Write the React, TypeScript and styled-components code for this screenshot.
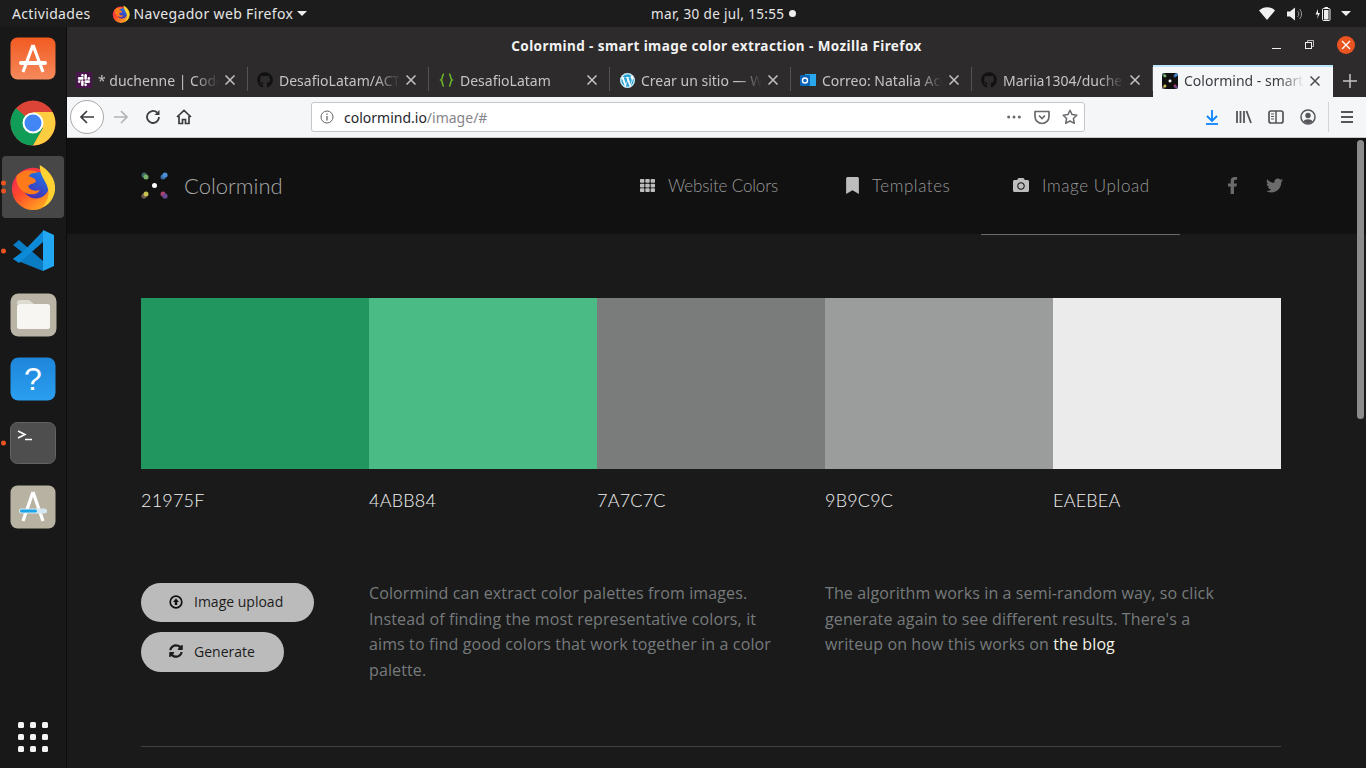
import React from 'react'
import styled, { createGlobalStyle } from 'styled-components'
import { FaBookmark, FaCamera, FaFacebookF, FaGithub, FaSlack, FaTh, FaTwitter, FaWordpress, FaSyncAlt } from 'react-icons/fa'

const GlobalStyle = createGlobalStyle`
  html, body {
    margin: 0;
    padding: 0;
    height: 100%;
    overflow: hidden;
    background: #1a1a1a;
  }
`

const Screen = styled.div`
  width: 1366px;
  height: 768px;
  display: flex;
  flex-direction: column;
  overflow: hidden;
  font-family: 'Noto Sans', 'Open Sans', sans-serif;
`

const TopBar = styled.div`
  height: 27px;
  flex: none;
  display: flex;
  align-items: center;
  background: #1c1c1c;
  color: #e6e6e6;
  font-size: 14px;
  letter-spacing: 0.35px;
  padding-left: 12px;
`

const TopLeft = styled.div`
  width: 639px;
  flex: none;
  display: flex;
  align-items: center;
`

const AppMenu = styled.div`
  display: flex;
  align-items: center;
  gap: 4px;
  margin-left: 21px;
`

const Clock = styled.div`
  display: flex;
  align-items: center;
  gap: 5px;
  width: 150px;
  font-size: 13.5px;
  white-space: nowrap;
`

const StatusDot = styled.span`
  width: 7px;
  height: 7px;
  border-radius: 50%;
  background: #eee;
`

const Tray = styled.div`
  margin-left: auto;
  display: flex;
  align-items: center;
  gap: 12px;
  padding-right: 15px;
`

const Caret = styled.span<{ $tight?: boolean }>`
  width: 0;
  height: 0;
  margin-left: ${(p) => (p.$tight ? '-2px' : '0')};
  border-left: 5px solid transparent;
  border-right: 5px solid transparent;
  border-top: 5px solid #eee;
`

const Desktop = styled.div`
  flex: 1;
  min-height: 0;
  display: flex;
`

const Dock = styled.div`
  width: 66px;
  flex: none;
  display: flex;
  flex-direction: column;
  background: #181818;
  border-right: 1px solid #0c0c0c;
`

const DockItem = styled.div<{ $active?: boolean }>`
  position: relative;
  width: 62px;
  height: 62px;
  margin: 1px 2px;
  display: flex;
  align-items: center;
  justify-content: center;
  border-radius: 4px;
  background: ${(p) => (p.$active ? '#474747' : 'transparent')};
`

const RunDots = styled.div`
  position: absolute;
  left: 0;
  top: 50%;
  transform: translate(-1px, -50%);
  display: flex;
  flex-direction: column;
  gap: 3px;
`

const RunDot = styled.span`
  width: 5px;
  height: 5px;
  border-radius: 50%;
  background: #e95420;
`

const DockGrid = styled.div`
  margin-top: auto;
  margin-bottom: 16px;
  margin-left: 18px;
  display: grid;
  grid-template-columns: repeat(3, 6px);
  gap: 6px;
`

const GridDot = styled.span`
  width: 6px;
  height: 6px;
  border-radius: 1.5px;
  background: #f4f4f4;
`

const Browser = styled.div`
  flex: 1;
  min-width: 0;
  display: flex;
  flex-direction: column;
`

const TitleBar = styled.div`
  position: relative;
  height: 38px;
  flex: none;
  display: flex;
  align-items: center;
  justify-content: center;
  background: #2d2b2c;
  color: #f2f2f2;
  font-size: 13.5px;
  font-weight: 700;
  letter-spacing: 0.42px;
`

const WindowControls = styled.div`
  position: absolute;
  right: 11px;
  top: 9px;
  display: flex;
  align-items: center;
  gap: 20px;
`

const CloseCircle = styled.div`
  width: 18px;
  height: 18px;
  border-radius: 50%;
  background: #e95420;
  display: flex;
  align-items: center;
  justify-content: center;
`

const TabStrip = styled.div`
  height: 32px;
  flex: none;
  display: flex;
  background: #2d2b2c;
`

const Tab = styled.div<{ $active?: boolean; $last?: boolean }>`
  position: relative;
  width: ${(p) => (p.$active ? '180px' : '181px')};
  flex: none;
  box-sizing: border-box;
  display: flex;
  align-items: center;
  gap: 6px;
  padding: 0 9px ${(p) => (p.$active ? '3px' : '2px')};
  font-size: 14px;
  color: ${(p) => (p.$active ? '#3d3d44' : '#c4c4c6')};
  background: ${(p) => (p.$active ? '#f5f6f7' : 'transparent')};
  border-top: ${(p) => (p.$active ? '2px solid #bce6fb' : '0')};
  &::after {
    content: '';
    display: ${(p) => (p.$active || p.$last ? 'none' : 'block')};
    position: absolute;
    right: 0;
    top: 2px;
    bottom: 6px;
    width: 1px;
    background: #555354;
  }
`

const FavSlot = styled.span`
  width: 16px;
  height: 16px;
  flex: none;
  display: flex;
  align-items: center;
  justify-content: center;
`

const SlackTile = styled(FavSlot)`
  background: #4a154b;
  color: #fff;
  font-size: 14px;
`

const TabTitle = styled.span`
  flex: 1;
  min-width: 0;
  white-space: nowrap;
  overflow: hidden;
  -webkit-mask-image: linear-gradient(to right, #000 80%, transparent 100%);
  mask-image: linear-gradient(to right, #000 80%, transparent 100%);
`

const NewTab = styled.div`
  flex: 1;
  display: flex;
  align-items: center;
  justify-content: center;
`

const NavBar = styled.div`
  position: relative;
  height: 40px;
  flex: none;
  display: flex;
  align-items: center;
  background: #f5f6f7;
  border-bottom: 1px solid #c9c9cb;
`

const BackButton = styled.div`
  width: 32px;
  height: 32px;
  margin-left: 3px;
  border-radius: 50%;
  background: #fff;
  border: 1px solid #a8a8aa;
  display: flex;
  align-items: center;
  justify-content: center;
`

const NavGlyph = styled.div<{ $width: number }>`
  width: ${(p) => p.$width}px;
  flex: none;
  display: flex;
  align-items: center;
  justify-content: center;
`

const UrlBox = styled.div`
  width: 774px;
  height: 30px;
  box-sizing: border-box;
  margin-left: 111px;
  padding: 0 6px 0 8px;
  display: flex;
  align-items: center;
  background: #fff;
  border: 1px solid #c6c6c8;
  border-radius: 3px;
  font-size: 14px;
`

const UrlHost = styled.span`
  color: #26262a;
  margin-left: 10px;
`

const UrlPath = styled.span`
  color: #85858a;
`

const UrlActions = styled.div`
  margin-left: auto;
  display: flex;
  align-items: center;
  gap: 12px;
`

const RightTools = styled.div`
  margin-left: 111px;
  display: flex;
  align-items: center;
`

const ToolDivider = styled.span`
  width: 1px;
  height: 30px;
  margin: 0 2px 0 4px;
  background: #d4d4d6;
`

const Viewport = styled.div`
  position: relative;
  flex: 1;
  min-height: 0;
  overflow: hidden;
  background: #1a1a1a;
`

const ScrollThumb = styled.div`
  position: absolute;
  top: 2px;
  right: 2px;
  width: 7px;
  height: 279px;
  border-radius: 4px;
  background: #8b8b8b;
`

const SiteHeader = styled.header`
  height: 96px;
  box-sizing: border-box;
  padding-left: 74px;
  display: flex;
  align-items: stretch;
  background: #111111;
`

const Brand = styled.div`
  display: flex;
  align-items: center;
  gap: 16px;
  width: 467px;
  padding-bottom: 2px;
  color: #a8a8a8;
  font-family: Lato, sans-serif;
  font-weight: 300;
  font-size: 22px;
`

const NavItem = styled.a<{ $active?: boolean; $width: number; $tracking: number }>`
  box-sizing: border-box;
  width: ${(p) => p.$width}px;
  height: 97px;
  padding: 0 0 2px 32px;
  display: flex;
  align-items: center;
  gap: 13px;
  color: #9a9a9a;
  font-family: Lato, sans-serif;
  font-weight: 300;
  font-size: 17px;
  letter-spacing: ${(p) => p.$tracking}px;
  margin-right: 4px;
  white-space: nowrap;
  border-bottom: 1px solid ${(p) => (p.$active ? '#6a6a6a' : 'transparent')};
  svg {
    color: #bdbdbd;
    flex: none;
  }
`

const BookmarkGlyph = styled(FaBookmark)`
  margin: 0 -2px;
`

const Social = styled.div`
  margin-left: 40px;
  padding-bottom: 2px;
  display: flex;
  align-items: center;
  gap: 25px;
  color: #6b6b6b;
  font-size: 17px;
`

const Main = styled.main`
  padding: 64px 85px 0 74px;
`

const Palette = styled.div`
  display: grid;
  grid-template-columns: repeat(5, 228px);
`

const Swatch = styled.div`
  display: flex;
  flex-direction: column;
`

const ColorBlock = styled.div<{ $color: string }>`
  height: 171px;
  background: ${(p) => p.$color};
`

const Hex = styled.div`
  margin-top: 19px;
  color: #f2f2f2;
  font-family: Lato, sans-serif;
  font-weight: 300;
  font-size: 18px;
  letter-spacing: 0.2px;
  line-height: 24px;
`

const Info = styled.section`
  margin-top: 71px;
  display: grid;
  grid-template-columns: repeat(5, 228px);
  height: 163px;
  border-bottom: 1px solid #414141;
`

const Actions = styled.div`
  display: flex;
  flex-direction: column;
  align-items: flex-start;
  gap: 10px;
`

const PillButton = styled.button<{ $height: number; $width: number }>`
  width: ${(p) => p.$width}px;
  height: ${(p) => p.$height}px;
  padding: 0 0 2px 28px;
  display: flex;
  align-items: center;
  gap: 11px;
  border: 0;
  border-radius: 20px;
  background: #bbbbbb;
  color: #1c1c1c;
  font-family: 'Open Sans', sans-serif;
  font-size: 14px;
`

const Copy = styled.p`
  grid-column: span 2;
  margin: -2px 0 0 0;
  max-width: 415px;
  color: #777a7c;
  font-family: 'Open Sans', sans-serif;
  font-size: 16px;
  letter-spacing: 0.12px;
  line-height: 25.6px;
  a {
    color: #f4f1e4;
  }
`

const FirefoxIcon = ({ size }: { size: number }) => {
  const id = `ff${size}`
  return (
    <svg width={size} height={size} viewBox='0 0 48 48'>
      <defs>
        <linearGradient id={id} x1='0' y1='0.1' x2='0.75' y2='1'>
          <stop offset='0' stopColor='#f0205f' />
          <stop offset='0.45' stopColor='#ff4a2a' />
          <stop offset='1' stopColor='#ffb020' />
        </linearGradient>
        <linearGradient id={`${id}g`} x1='0.8' y1='0' x2='0.3' y2='1'>
          <stop offset='0' stopColor='#1e78e8' />
          <stop offset='1' stopColor='#4a2ab0' />
        </linearGradient>
      </defs>
      <circle cx='24' cy='26' r='22' fill={`url(#${id})`} />
      <circle cx='27' cy='22' r='14' fill={`url(#${id}g)`} />
      <path d='M31 1c9 5 17 14 16 26-1 9-7 16-13 18 4-5 7-10 6-17-1-10-9-14-9-27z' fill='#ffd234' />
      <path d='M7 12c6-6 16-7 22-3-5 0-9 1-9 4 3 1 7 2 7 5-1 3-6 2-8 5 1 4 6 6 12 4-2 5-9 6-15 3-6-3-11-10-9-18z' fill='#ff7a1a' />
    </svg>
  )
}

const ChromeIcon = () => (
  <svg width='46' height='46' viewBox='0 0 46 46'>
    <circle cx='23' cy='23' r='22.5' fill='#db4437' />
    <path d='M23 23 3.500 34.300A22.500 22.500 0 0 1 6 8.200z' fill='#0f9d58' />
    <path d='M23 23 3.500 34.300A22.500 22.500 0 0 0 23 45.500L33 28z' fill='#0f9d58' />
    <path d='M23 12h19.500A22.500 22.500 0 0 1 23 45.500L33 28z' fill='#ffcd40' />
    <circle cx='23' cy='23' r='10.500' fill='#fff' />
    <circle cx='23' cy='23' r='8.500' fill='#4285f4' />
  </svg>
)

const SoftwareIcon = () => (
  <svg width='46' height='44' viewBox='0 0 46 44'>
    <defs>
      <linearGradient id='sw' x1='0' y1='0' x2='0' y2='1'>
        <stop offset='0' stopColor='#f25a21' />
        <stop offset='1' stopColor='#f58a5c' />
      </linearGradient>
    </defs>
    <rect x='0.500' y='0.500' width='45' height='42' rx='7' fill='url(#sw)' />
    <path d='M23 8 13 35M23 8l10 27' stroke='#fff' strokeWidth='3.200' fill='none' />
    <rect x='9' y='24' width='28' height='4' rx='2' fill='#fff' />
  </svg>
)

const VscodeIcon = () => (
  <svg width='44' height='44' viewBox='0 0 44 44'>
    <path d='M2 16 8 11l24 21-0 10L2 30l9-7z' fill='#0a7cc4' />
    <path d='M32 2 12 23 2 30l6 4 24-21z' fill='#0e8bd8' />
    <path d='M32 1l11 5v31l-11 5z' fill='#22a7f2' />
  </svg>
)

const FilesIcon = () => (
  <svg width='47' height='44' viewBox='0 0 47 44'>
    <rect x='0.500' y='0.500' width='46' height='43' rx='8' fill='#b9b4a5' />
    <path d='M7 10a3 3 0 0 1 3-3h9l5 4h-17z' fill='#dedbd3' />
    <rect x='7' y='11' width='33' height='25' rx='2.500' fill='#f7f6f3' />
  </svg>
)

const HelpIcon = () => (
  <svg width='46' height='44' viewBox='0 0 46 44'>
    <defs>
      <linearGradient id='hp' x1='0' y1='0' x2='0' y2='1'>
        <stop offset='0' stopColor='#1f86da' />
        <stop offset='1' stopColor='#2a9ff0' />
      </linearGradient>
    </defs>
    <rect x='0.500' y='0.500' width='45' height='43' rx='8' fill='url(#hp)' />
    <text x='23' y='33' textAnchor='middle' fontFamily='Liberation Sans, sans-serif' fontSize='32' fill='#fff'>?</text>
  </svg>
)

const TerminalIcon = () => (
  <svg width='46' height='42' viewBox='0 0 46 42'>
    <rect x='0.500' y='0.500' width='45' height='41' rx='7' fill='#4e4e4e' stroke='#636363' />
    <path d='M8 9l7 3.500-7 3.500' stroke='#fff' strokeWidth='1.500' fill='none' />
    <path d='M15 17.500h7' stroke='#fff' strokeWidth='1.500' />
  </svg>
)

const UpdatesIcon = () => (
  <svg width='46' height='44' viewBox='0 0 46 44'>
    <rect x='0.500' y='0.500' width='45' height='43' rx='7' fill='#b7b2a2' />
    <path d='M23 7 13 36M23 7l10 29' stroke='#fff' strokeWidth='3.200' fill='none' />
    <rect x='9' y='23.500' width='28' height='5' rx='2.500' fill='#d4e8f2' />
    <rect x='10' y='24.500' width='17' height='3' rx='1.500' fill='#1ea5e8' />
  </svg>
)

const TabClose = ({ color = '#c4c4c6' }: { color?: string }) => (
  <svg width='10' height='10' viewBox='0 0 10 10' style={{ flex: 'none', marginRight: 4 }}>
    <path d='M.5.500l9 9M9.500.500l-9 9' stroke={color} strokeWidth='1.500' />
  </svg>
)

const BraceIcon = () => (
  <svg width='16' height='16' viewBox='0 0 16 16'>
    <path d='M6 2C4 2 5 7 3 8c2 1 1 6 3 6M11 2c2 0 1 5 3 6-2 1-1 6-3 6' stroke='#6bb52a' strokeWidth='1.600' fill='none' />
  </svg>
)

const OutlookIcon = () => (
  <svg width='16' height='16' viewBox='0 0 16 16'>
    <rect x='5' y='2' width='11' height='12' fill='#28a8ea' />
    <rect x='0' y='3' width='10' height='11' rx='1' fill='#0a64b8' />
    <circle cx='5' cy='8.500' r='2.500' fill='none' stroke='#fff' strokeWidth='1.400' />
  </svg>
)

const ColormindMark = ({ size, dark }: { size: number; dark?: boolean }) => (
  <svg width={size} height={size} viewBox='0 0 27 27'>
    {dark && <rect width='27' height='27' rx='4' fill='#111' />}
    <circle cx='13.500' cy='13.500' r='2.500' fill='#fff' />
    <circle cx='3.200' cy='3.200' r='2.600' fill='#3d6b66' />
    <circle cx='5' cy='5' r='2.500' fill='#78b06a' />
    <circle cx='22' cy='5' r='2.500' fill='#3a6ea8' />
    <circle cx='24' cy='3' r='2.600' fill='#4a90d8' />
    <circle cx='3' cy='24' r='2.600' fill='#6a5a50' />
    <circle cx='5' cy='22' r='2.500' fill='#c8c050' />
    <circle cx='22' cy='22' r='2.500' fill='#b04070' />
    <circle cx='24' cy='24' r='2.600' fill='#6a4a90' />
  </svg>
)

const UploadGlyph = () => (
  <svg width='14' height='14' viewBox='0 0 14 14'>
    <circle cx='7' cy='7' r='5.800' fill='none' stroke='#111' strokeWidth='1.700' />
    <path d='M7 3.400 10 7H8.200v3H5.800V7H4z' fill='#111' />
  </svg>
)

const swatches = [
  { color: '#21975f', hex: '21975F' },
  { color: '#4abb84', hex: '4ABB84' },
  { color: '#7a7c7c', hex: '7A7C7C' },
  { color: '#9b9c9c', hex: '9B9C9C' },
  { color: '#eaebea', hex: 'EAEBEA' },
]

const GITHUB = <FaGithub size={16} color='#111' />

const tabs: { title: string; icon: React.ReactNode }[] = [
  { title: '* duchenne | Code Institute', icon: <SlackTile><FaSlack /></SlackTile> },
  { title: 'DesafioLatam/ACTIVIDADES', icon: GITHUB },
  { title: 'DesafioLatam', icon: <BraceIcon /> },
  { title: 'Crear un sitio — WordPress', icon: <FaWordpress size={15} color='#2ba4d6' style={{ background: '#fff', borderRadius: '50%' }} /> },
  { title: 'Correo: Natalia Acevedo', icon: <OutlookIcon /> },
  { title: 'Mariia1304/duchenne', icon: GITHUB },
]

const dockIcons = [
  { icon: <SoftwareIcon />, dots: 0 },
  { icon: <ChromeIcon />, dots: 0 },
  { icon: <FirefoxIcon size={46} />, dots: 2, active: true },
  { icon: <VscodeIcon />, dots: 1 },
  { icon: <FilesIcon />, dots: 0 },
  { icon: <HelpIcon />, dots: 0 },
  { icon: <TerminalIcon />, dots: 1 },
  { icon: <UpdatesIcon />, dots: 0 },
]

export default function App() {
  return (
    <Screen>
      <GlobalStyle />
      <TopBar>
        <TopLeft>
          <span>Actividades</span>
          <AppMenu>
            <FirefoxIcon size={18} />
            <span>Navegador web Firefox</span>
            <Caret />
          </AppMenu>
        </TopLeft>
        <Clock>
          <span>mar, 30 de jul, 15:55</span>
          <StatusDot />
        </Clock>
        <Tray>
          <svg width='16' height='13' viewBox='0 0 16 13'>
            <path d='M0 3.500C4.500-1 11.500-1 16 3.500L8 13z' fill='#f2f2f2' />
          </svg>
          <svg width='16' height='14' viewBox='0 0 16 14'>
            <path d='M0 4.500h3L8 .500v13l-5-4H0z' fill='#eee' />
            <path d='M10.500 4a4 4 0 0 1 0 6M12.500 2a7 7 0 0 1 0 10' stroke='#999' fill='none' />
          </svg>
          <svg width='16' height='16' viewBox='0 0 16 16'>
            <path d='M3 3 0.500 8.500H3L2 13l3-6H3z' fill='#eee' />
            <rect x='7.500' y='2.500' width='7.500' height='12' rx='1' fill='none' stroke='#eee' />
            <rect x='9' y='4' width='4.500' height='9.500' fill='#eee' />
            <rect x='9.500' y='1' width='3.500' height='1.500' fill='#eee' />
          </svg>
          <Caret $tight />
        </Tray>
      </TopBar>
      <Desktop>
        <Dock>
          {dockIcons.map((d, i) => (
            <DockItem key={i} $active={d.active}>
              {d.dots > 0 && (
                <RunDots>
                  {Array.from({ length: d.dots }).map((_, j) => (
                    <RunDot key={j} />
                  ))}
                </RunDots>
              )}
              {d.icon}
            </DockItem>
          ))}
          <DockGrid>
            {Array.from({ length: 9 }).map((_, i) => (
              <GridDot key={i} />
            ))}
          </DockGrid>
        </Dock>
        <Browser>
          <TitleBar>
            Colormind - smart image color extraction - Mozilla Firefox
            <WindowControls>
              <svg width='9' height='10' viewBox='0 0 9 10'>
                <path d='M0 8.500h9' stroke='#eee' />
              </svg>
              <svg width='16' height='10' viewBox='0 0 16 10'>
                <path d='M6.500 2.500v-2h6v6h-2' stroke='#bbb' fill='none' />
                <rect x='4.500' y='2.500' width='6' height='6' stroke='#eee' fill='none' />
              </svg>
              <CloseCircle>
                <svg width='10' height='10' viewBox='0 0 10 10'>
                  <path d='M1 1l8 8M9 1l-8 8' stroke='#fff' strokeWidth='1.300' />
                </svg>
              </CloseCircle>
            </WindowControls>
          </TitleBar>
          <TabStrip>
            {tabs.map((t, i) => (
              <Tab key={i}>
                <FavSlot>{t.icon}</FavSlot>
                <TabTitle>{t.title}</TabTitle>
                <TabClose />
              </Tab>
            ))}
            <Tab $active>
              <FavSlot><ColormindMark size={16} dark /></FavSlot>
              <TabTitle>Colormind - smart image</TabTitle>
              <TabClose color='#4a4a4f' />
            </Tab>
            <NewTab>
              <svg width='14' height='14' viewBox='0 0 14 14'>
                <path d='M7 0v14M0 7h14' stroke='#c4c4c6' strokeWidth='1.500' />
              </svg>
            </NewTab>
          </TabStrip>
          <NavBar>
            <BackButton>
              <svg width='16' height='16' viewBox='0 0 16 16'>
                <path d='M15 8H2M8 2 2 8l6 6' stroke='#3c3c40' strokeWidth='1.700' fill='none' />
              </svg>
            </BackButton>
            <NavGlyph $width={34}>
              <svg width='16' height='16' viewBox='0 0 16 16'>
                <path d='M1 8h13M8 2l6 6-6 6' stroke='#b4b4b6' strokeWidth='1.700' fill='none' />
              </svg>
            </NavGlyph>
            <NavGlyph $width={30}>
              <svg width='16' height='16' viewBox='0 0 16 16'>
                <path d='M14 8a6 6 0 1 1-2-4.500' stroke='#3c3c40' strokeWidth='1.800' fill='none' />
                <path d='M14.500 1v5h-5z' fill='#3c3c40' />
              </svg>
            </NavGlyph>
            <NavGlyph $width={32}>
              <svg width='16' height='16' viewBox='0 0 16 16'>
                <path d='M1 8l7-6.500L15 8M3 7v7.500h3.500v-4h3v4H13V7' stroke='#3c3c40' strokeWidth='1.700' fill='none' />
              </svg>
            </NavGlyph>
            <UrlBox>
              <svg width='14' height='14' viewBox='0 0 14 14'>
                <circle cx='7' cy='7' r='6' fill='none' stroke='#66666a' />
                <path d='M7 6v4.500M7 3.500v1.300' stroke='#66666a' strokeWidth='1.300' />
              </svg>
              <UrlHost>colormind.io<UrlPath>/image/#</UrlPath></UrlHost>
              <UrlActions>
                <svg width='16' height='4' viewBox='0 0 18 4'>
                  <circle cx='3' cy='2' r='1.700' fill='#6a6a6e' />
                  <circle cx='9' cy='2' r='1.700' fill='#6a6a6e' />
                  <circle cx='15' cy='2' r='1.700' fill='#6a6a6e' />
                </svg>
                <svg width='16' height='16' viewBox='0 0 16 16'>
                  <path d='M1 2.500h14v5a7 7 0 0 1-14 0z' stroke='#6a6a6e' strokeWidth='1.700' fill='none' strokeLinejoin='round' />
                  <path d='M5 6.500l3 3 3-3' stroke='#6a6a6e' strokeWidth='1.700' fill='none' />
                </svg>
                <svg width='16' height='16' viewBox='0 0 16 16'>
                  <path d='M8 1.200l2.100 4.400 4.700.6-3.400 3.300.9 4.800L8 12l-4.300 2.300.9-4.800L1.200 6.200l4.700-.6z' stroke='#6a6a6e' strokeWidth='1.500' fill='none' strokeLinejoin='round' />
                </svg>
              </UrlActions>
            </UrlBox>
            <RightTools>
              <NavGlyph $width={32}>
                <svg width='16' height='16' viewBox='0 0 16 16'>
                  <path d='M8 1v10M3 7l5 5 5-5' stroke='#0a84ff' strokeWidth='1.800' fill='none' />
                  <path d='M2 15h12' stroke='#0a84ff' strokeWidth='1.800' />
                </svg>
              </NavGlyph>
              <NavGlyph $width={32}>
                <svg width='16' height='16' viewBox='0 0 16 16'>
                  <path d='M1 2v12M4.500 2v12M8 2v12M10.500 2l4.500 12' stroke='#55555a' strokeWidth='1.800' fill='none' />
                </svg>
              </NavGlyph>
              <NavGlyph $width={32}>
                <svg width='16' height='16' viewBox='0 0 16 16'>
                  <rect x='1' y='2' width='14' height='12' rx='2' stroke='#55555a' strokeWidth='1.700' fill='none' />
                  <path d='M3 5h3M3 7.500h3M3 10h3' stroke='#55555a' />
                  <path d='M8 2v12' stroke='#55555a' strokeWidth='1.500' />
                </svg>
              </NavGlyph>
              <NavGlyph $width={32}>
                <svg width='16' height='16' viewBox='0 0 16 16'>
                  <circle cx='8' cy='8' r='7' stroke='#55555a' strokeWidth='1.500' fill='none' />
                  <circle cx='8' cy='6.500' r='2.700' fill='#55555a' />
                  <path d='M3.500 12.500c1-3 8-3 9 0A7 7 0 0 1 3.500 12.500z' fill='#55555a' />
                </svg>
              </NavGlyph>
              <ToolDivider />
              <NavGlyph $width={32}>
                <svg width='14' height='14' viewBox='0 0 14 14'>
                  <path d='M1 2h12M1 7h12M1 12h12' stroke='#55555a' strokeWidth='1.800' />
                </svg>
              </NavGlyph>
            </RightTools>
          </NavBar>
          <Viewport>
            <SiteHeader>
              <Brand>
                <ColormindMark size={27} />
                Colormind
              </Brand>
              <NavItem $width={202} $tracking={-0.15}>
                <FaTh size={15} />
                Website Colors
              </NavItem>
              <NavItem $width={163} $tracking={0.55}>
                <BookmarkGlyph size={17} />
                Templates
              </NavItem>
              <NavItem $active $width={199} $tracking={0.6}>
                <FaCamera size={16} />
                Image Upload
              </NavItem>
              <Social>
                <FaFacebookF />
                <FaTwitter />
              </Social>
            </SiteHeader>
            <Main>
              <Palette>
                {swatches.map((s) => (
                  <Swatch key={s.hex}>
                    <ColorBlock $color={s.color} />
                    <Hex>{s.hex}</Hex>
                  </Swatch>
                ))}
              </Palette>
              <Info>
                <Actions>
                  <PillButton $width={173} $height={39}>
                    <UploadGlyph />
                    Image upload
                  </PillButton>
                  <PillButton $width={143} $height={40}>
                    <FaSyncAlt size={14} />
                    Generate
                  </PillButton>
                </Actions>
                <Copy>
                  Colormind can extract color palettes from images. Instead of finding the most representative colors, it aims to find good colors that work together in a color palette.
                </Copy>
                <Copy>
                  The algorithm works in a semi-random way, so click generate again to see different results. There's a writeup on how this works on <a>the blog</a>
                </Copy>
              </Info>
            </Main>
            <ScrollThumb />
          </Viewport>
        </Browser>
      </Desktop>
    </Screen>
  )
}
